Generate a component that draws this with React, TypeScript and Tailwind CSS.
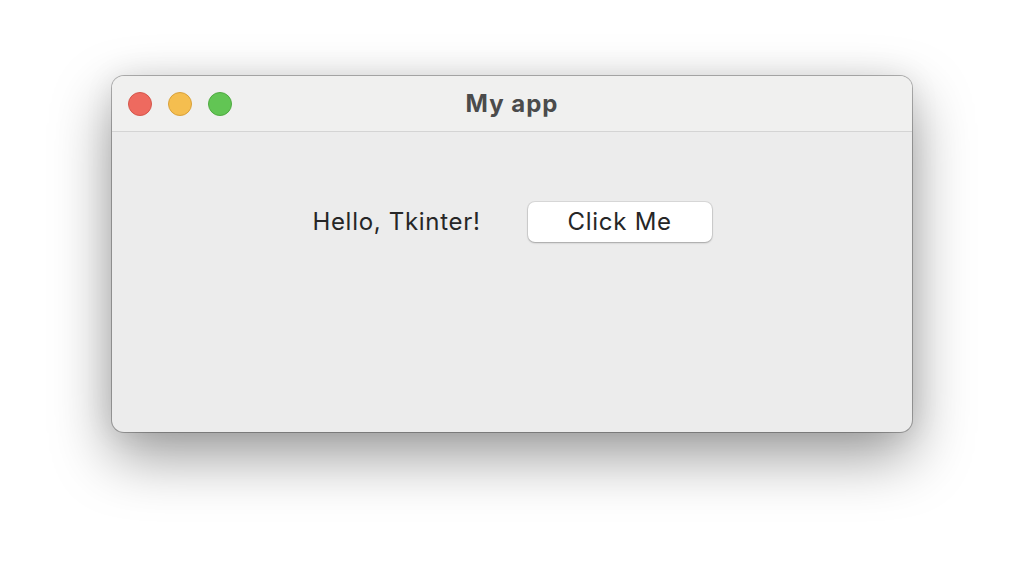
import React from "react";

export default function App() {
  return (
    <div className="w-[1024px] h-[580px] bg-white pt-[76px] pl-[112px]" style={{ fontFamily: "Inter, 'Noto Sans', sans-serif" }}>
      <div className="w-[800px] h-[356px] rounded-[12px] bg-[#ececec] flex flex-col overflow-hidden shadow-[0_0_0_1px_rgba(0,0,0,0.28),0_24px_60px_rgba(0,0,0,0.4),0_0_30px_rgba(0,0,0,0.08)]">
        <div className="h-[56px] bg-[#f0f0ef] border-b border-[#d4d4d4] flex items-center relative shrink-0">
          <div className="flex items-center gap-[16px] pl-[16px]">
            <div className="w-[24px] h-[24px] rounded-full bg-[#ee6a5f] border border-[#d5564b]" />
            <div className="w-[24px] h-[24px] rounded-full bg-[#f5be4f] border border-[#d9a13a]" />
            <div className="w-[24px] h-[24px] rounded-full bg-[#62c554] border border-[#4faa41]" />
          </div>
          <div className="absolute inset-0 flex items-center justify-center pointer-events-none">
            <span className="text-[24px] font-bold text-[#4b4b4b] tracking-[1px]">My app</span>
          </div>
        </div>
        <div className="flex-1 flex justify-center items-start pt-[70px] gap-[47px]">
          <span className="text-[24px] text-[#262626] leading-[40px] tracking-[0.7px]">Hello, Tkinter!</span>
          <button className="w-[184px] h-[40px] rounded-[7px] bg-white text-[24px] text-[#262626] tracking-[0.75px] flex items-center justify-center shadow-[0_0_0_1px_rgba(0,0,0,0.08),0_1px_2px_rgba(0,0,0,0.25)]">
            Click Me
          </button>
        </div>
      </div>
    </div>
  );
}
